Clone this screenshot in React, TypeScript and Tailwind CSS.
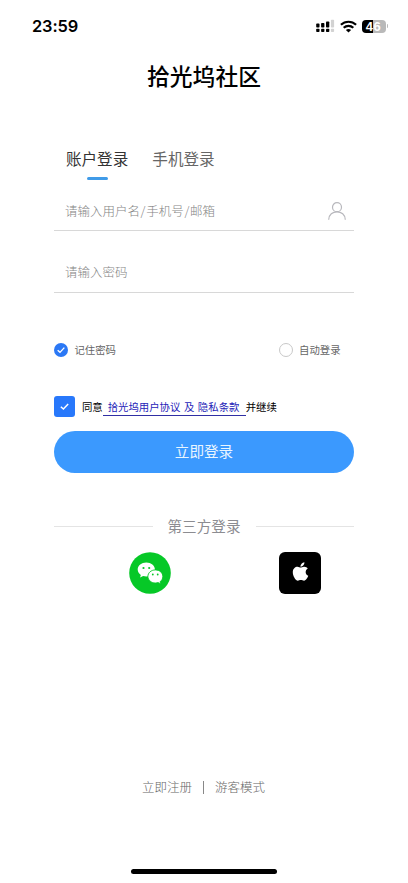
import { FaApple } from "react-icons/fa";

function StatusBar() {
  return (
    <div className="flex h-[52px] items-center justify-between pl-[32px] pr-[20px]">
      <span className="font-[Inter,sans-serif] text-[16.4px] font-semibold leading-none tracking-[-0.1px]">23:59</span>
      <div className="flex items-center">
        <svg width="19" height="14" viewBox="0 0 19 14" className="mr-[5px]">
          <g fill="#000">
            <rect x="0.200" y="4.600" width="3.300" height="4" rx="0.800" />
            <rect x="5.100" y="4" width="3.300" height="4.600" rx="0.800" />
            <rect x="10" y="2.400" width="3.300" height="6.200" rx="0.800" />
            <rect x="0.200" y="9.800" width="3.300" height="3.300" rx="0.800" />
            <rect x="5.100" y="9.800" width="3.300" height="3.300" rx="0.800" />
            <rect x="10" y="9.800" width="3.300" height="3.300" rx="0.800" />
          </g>
          <rect x="14.900" y="0.800" width="3.200" height="7.800" rx="0.800" fill="#d2d2d2" />
          <rect x="14.900" y="9.800" width="3.200" height="3.300" rx="0.800" fill="#d2d2d2" />
        </svg>
        <svg width="17" height="13" viewBox="0 0 17 13" className="mr-[5px]" fill="none" stroke="#000" strokeWidth="2.2">
          <path d="M0.9 4.8C5.2 0.7 11.8 0.7 16.1 4.8" />
          <path d="M3.7 7.7C6.4 5.2 10.6 5.2 13.3 7.7" />
          <path d="M8.5 12.5L5.9 9.9C7.4 8.6 9.6 8.6 11.1 9.9Z" fill="#000" stroke="none" />
        </svg>
        <div className="flex h-[13px] w-[24px] items-center justify-center rounded-[4px] bg-linear-to-r from-black from-47% to-[#b9b9b9] to-47% pt-px font-['Liberation_Sans',sans-serif] text-[13px] font-bold leading-none tracking-[0.6px] text-white">
          46
        </div>
        <div className="ml-px h-[4px] w-[1.5px] rounded-r-full bg-[#b9b9b9]" />
      </div>
    </div>
  );
}

function Check({ size }: { size: number }) {
  return (
    <svg width={size} height={size} viewBox="0 0 12 12" fill="none" stroke="#fff" strokeWidth="1.6">
      <path d="M2 6.2L4.8 8.8L10 3.2" />
    </svg>
  );
}

function WeChat() {
  return (
    <svg width="42" height="42" viewBox="0 0 42 42">
      <circle cx="21" cy="21" r="20.800" fill="#06c827" />
      <path d="M17.300 10.600c-4.800 0-8.600 3-8.600 6.900 0 2.200 1.200 4.100 3.100 5.400l-.7 2.600 3-1.500c1 .3 2.100.4 3.200.4 4.800 0 8.600-3.100 8.600-6.900s-3.800-6.900-8.600-6.900z" fill="#fff" />
      <path d="M26.400 17.900c-4.200 0-7.500 2.900-7.500 6.500s3.300 6.600 7.500 6.600c1 0 1.900-.2 2.700-.4l2.700 1.300-.7-2.200c1.700-1.200 2.700-3.100 2.700-5.300 0-3.600-3.200-6.500-7.400-6.500z" fill="#fff" stroke="#06c827" strokeWidth="0.9" />
      <g fill="#06c827">
        <circle cx="14.500" cy="16" r="1.100" />
        <circle cx="20.200" cy="16" r="1.100" />
        <circle cx="23.800" cy="22.500" r="0.900" />
        <circle cx="28.700" cy="22.500" r="0.900" />
      </g>
    </svg>
  );
}

export default function App() {
  return (
    <div className="flex h-[883px] w-[408px] flex-col overflow-hidden bg-white font-['Noto_Sans_CJK_SC',sans-serif] text-black">
      <StatusBar />
      <h1 className="flex h-[50px] items-center justify-center pb-[2px] text-[22.8px] font-medium leading-none">拾光坞社区</h1>

      <main className="flex flex-1 flex-col px-[54.4px]">
        <div className="mt-[41px] flex h-[37px] gap-[24px] pl-[11.5px] text-[15.6px] leading-[30px]">
          <div className="flex flex-col items-center text-[#333]">
            <span>账户登录</span>
            <span className="mt-[4px] h-[3px] w-[21px] rounded-full bg-[#409be8]" />
          </div>
          <span className="text-[#666]">手机登录</span>
        </div>

        <div className="mt-[11px] flex h-[40px] items-center justify-between border-b border-[#d8d8d8] pl-[10.5px] pr-[8px] text-[12.5px] font-light text-[#858585]">
          <span className="pt-px">请输入用户名<span className="mx-[0.7px]">/</span>手机号<span className="mx-[0.7px]">/</span>邮箱</span>
          <svg width="18" height="19" viewBox="0 0 18 19" className="mt-px" fill="none" stroke="#b8b8bd" strokeWidth="1.2">
            <circle cx="9" cy="5.200" r="4.500" />
            <path d="M0.700 17.800C0.700 7.100 17.300 7.100 17.300 17.800" />
          </svg>
        </div>
        <div className="mt-[21px] flex h-[41px] items-center border-b border-[#d8d8d8] pl-[10.5px] pt-px text-[12.5px] font-light text-[#858585]">
          请输入密码
        </div>

        <div className="mt-[47px] flex h-[20px] items-center justify-between pr-[13px] text-[10.4px] text-[#666]">
          <div className="flex items-center gap-[6px]">
            <span className="flex size-[14px] items-center justify-center rounded-full bg-[#2b78f5]">
              <Check size={10} />
            </span>
            <span>记住密码</span>
          </div>
          <div className="flex items-center gap-[6px]">
            <span className="size-[14px] rounded-full border border-[#c8c8c8]" />
            <span>自动登录</span>
          </div>
        </div>

        <div className="mt-[35px] mb-px flex h-[22px] items-center text-[10.4px] leading-none">
          <span className="mr-[6.5px] flex size-[21px] items-center justify-center rounded-[3px] bg-[#2878fb]">
            <Check size={11} />
          </span>
          <span className="pt-[2px]">同意</span>
          <span className="mt-[3px] flex h-[17px] w-[143px] items-center border-b border-[#302fa4] pl-[5px] pt-px text-[#2523b8] [word-spacing:1.2px]">
            拾光坞用户协议 及 隐私条款
          </span>
          <span className="pt-[2px]">并继续</span>
        </div>

        <button className="mt-[13px] h-[42px] rounded-full bg-[#3b99fe] pb-[2px] text-[14.6px] leading-none text-[#e8f5ff]">立即登录</button>

        <div className="mt-[43px] flex h-[20px] items-center gap-[15px] text-[14.6px] leading-none text-[#8c8c91]">
          <span className="h-px flex-1 bg-[#e4e4e4]" />
          <span>第三方登录</span>
          <span className="h-px flex-1 bg-[#e4e4e4]" />
        </div>

        <div className="mt-[16px] flex justify-between pl-[75px] pr-[32.5px]">
          <WeChat />
          <span className="flex size-[42px] items-center justify-center rounded-[6px] bg-black pb-[3px] text-white">
            <FaApple size={21} />
          </span>
        </div>

        <div className="mt-auto mb-[72px] flex h-[20px] items-center justify-center gap-[11px] pr-px text-[12.5px] font-light leading-none text-[#666]">
          <span>立即注册</span>
          <span className="h-[13px] w-px bg-[#888]" />
          <span>游客模式</span>
        </div>
      </main>
      <div className="mb-[9px] h-[5px] w-[146px] self-center rounded-full bg-black" />
    </div>
  );
}
